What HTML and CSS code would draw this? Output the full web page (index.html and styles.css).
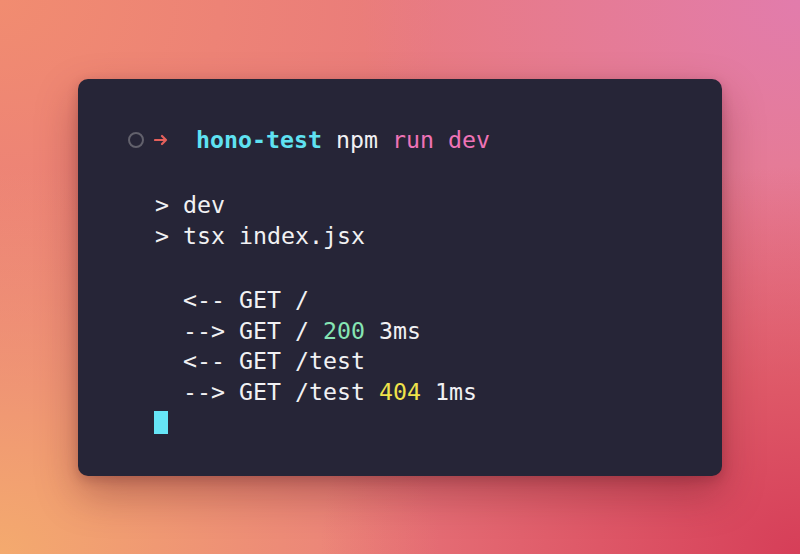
FILE: index.html
```html
<!DOCTYPE html>
<html lang="en">
<head>
<meta charset="utf-8">
<title>hono-test terminal</title>
<link rel="stylesheet" href="styles.css">
</head>
<body>
<main class="window">
  <div class="term">
    <div class="prompt">
      <span class="dot"></span>
      <svg class="arrow" width="14" height="12" viewBox="0 0 14 12" aria-hidden="true">
        <path d="M1 6 H12 M8 2 L12 6 L8 10" fill="none" stroke="#e5605b" stroke-width="2.2" stroke-linecap="round" stroke-linejoin="round"/>
      </svg>
      <span class="line">  <span class="dir">hono-test</span> npm <span class="cmd">run dev</span></span>
    </div>
    <pre class="out">&gt; dev
&gt; tsx index.jsx</pre>
    <pre class="log">  &lt;-- GET /
  --&gt; GET / <span class="ok">200</span> 3ms
  &lt;-- GET /test
  --&gt; GET /test <span class="warn">404</span> 1ms</pre>
    <div class="cursor"></div>
  </div>
</main>
</body>
</html>
```

FILE: styles.css
```css
html, body {
  margin: 0;
  height: 100%;
}

body {
  min-height: 100vh;
  display: flex;
  align-items: center;
  justify-content: center;
  background:
    radial-gradient(ellipse 60% 70% at 100% 100%, rgba(214, 62, 88, 1) 0%, rgba(214, 62, 88, 0) 100%),
    radial-gradient(ellipse 55% 70% at 100% 0%, rgba(226, 124, 172, 1) 0%, rgba(226, 124, 172, 0) 100%),
    radial-gradient(ellipse 55% 70% at 0% 100%, rgba(244, 170, 110, 1) 0%, rgba(244, 170, 110, 0) 100%),
    radial-gradient(ellipse 55% 70% at 0% 0%, rgba(241, 140, 112, 1) 0%, rgba(241, 140, 112, 0) 100%),
    #e97a7c;
  font-family: "DejaVu Sans Mono", "Liberation Mono", monospace;
}

.window {
  width: 644px;
  height: 397px;
  box-sizing: border-box;
  background: #262537;
  border-radius: 10px;
  box-shadow: 0 18px 40px rgba(90, 20, 30, 0.35), 0 4px 12px rgba(60, 10, 20, 0.2);
  padding: 46px 0 0 77px;
}

.term {
  color: #f1f1f3;
  font-size: 23.25px;
  line-height: 30.5px;
}

.prompt {
  display: flex;
  align-items: center;
  margin-left: -27px;
  height: 30.5px;
}

.dot {
  width: 16px;
  height: 16px;
  box-sizing: border-box;
  border: 2.5px solid #62616c;
  border-radius: 50%;
  margin-right: 10px;
  flex: none;
}

.arrow {
  flex: none;
  margin-top: 1px;
}

.line {
  white-space: pre;
}

.dir {
  color: #5fe2f2;
  font-weight: bold;
}

.cmd {
  color: #ee73b6;
}

.out,
.log {
  margin: 0;
  font: inherit;
  line-height: inherit;
  white-space: pre;
}

.out {
  margin-top: 35px;
}

.log {
  margin-top: 34px;
}

.ok {
  color: #86e5b4;
}

.warn {
  color: #f0e34b;
}

.cursor {
  width: 14px;
  height: 23px;
  margin-top: 4px;
  margin-left: -1px;
  background: #66e5f6;
}
```
